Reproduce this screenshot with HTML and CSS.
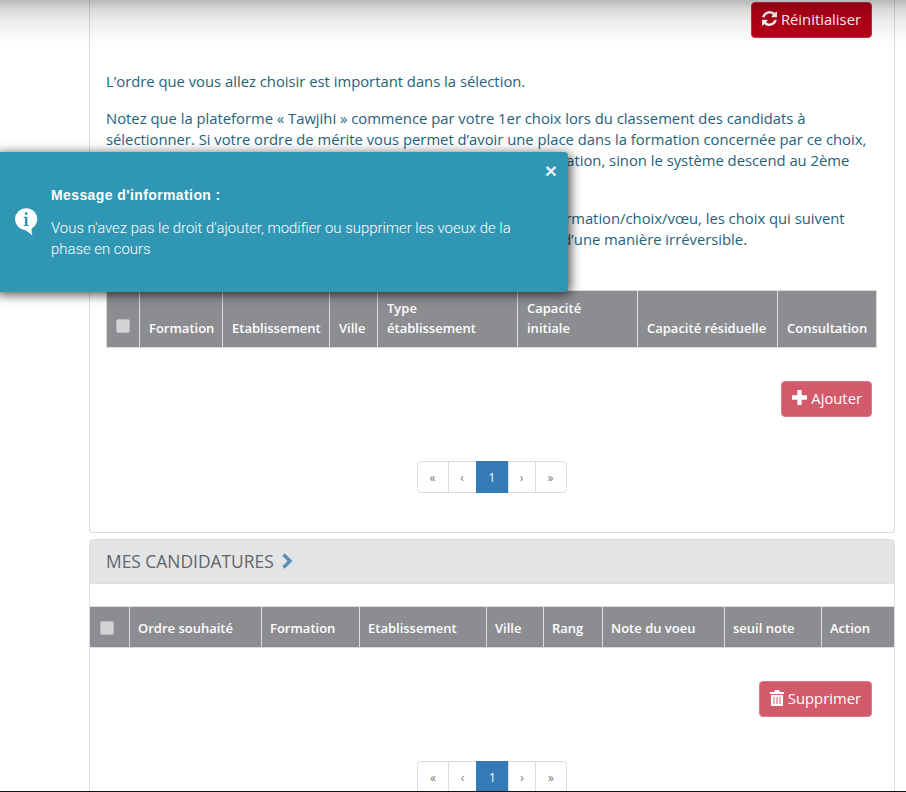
FILE: index.html
```html
<!DOCTYPE html>
<html lang="fr">
<head>
<meta charset="utf-8">
<title>Tawjihi</title>
<link rel="stylesheet" href="styles.css">
</head>
<body>
<div class="page">
  <div class="topshade"></div>
  <section class="panel panel-first">
    <div class="actions actions-reset">
      <button class="btn btn-red"><svg class="ico" viewBox="0 0 1536 1536"><path fill="currentColor" d="M1511 928q0 5-1 7-64 268-268 434.5t-478 166.5q-146 0-282.5-55t-243.5-157l-129 129q-19 19-45 19t-45-19-19-45v-448q0-26 19-45t45-19h448q26 0 45 19t19 45-19 45l-137 137q71 66 161 102t187 36q134 0 250-65t186-179q11-17 53-117 8-23 30-23h192q13 0 22.5 9.5t9.5 22.5zm25-800v448q0 26-19 45t-45 19h-448q-26 0-45-19t-19-45 19-45l138-138q-148-137-349-137-134 0-250 65t-186 179q-11 17-53 117-8 23-30 23h-199q-13 0-22.5-9.5t-9.5-22.5v-7q65-268 270-434.5t480-166.5q146 0 284 55.5t245 156.5l130-129q19-19 45-19t45 19 19 45z"/></svg> Réinitialiser</button>
    </div>
    <div class="intro">
      <p>L’ordre que vous allez choisir est important dans la sélection.</p>
      <p>Notez que la plateforme « Tawjihi » commence par votre 1er choix lors du classement des candidats à<br>sélectionner. Si votre ordre de mérite vous permet d’avoir une place dans la formation concernée par ce choix,<br>elle vous est attribuée et les autres choix sont ignorés dans la formation, sinon le système descend au 2ème<br>choix et ainsi de suite.</p>
      <p>Attention : dès que le système vous a attribué une place sur une formation/choix/vœu, les choix qui suivent<br>ce dernier sur votre liste de vœux sont automatiquement annulés d’une manière irréversible.</p>
    </div>
    <table class="grid grid-offers">
      <thead>
        <tr>
          <th><span class="check"></span></th>
          <th>Formation</th>
          <th>Etablissement</th>
          <th>Ville</th>
          <th>Type<br>établissement</th>
          <th>Capacité<br>initiale</th>
          <th>Capacité résiduelle</th>
          <th>Consultation</th>
        </tr>
      </thead>
    </table>
    <div class="actions actions-add">
      <button class="btn btn-rose"><svg class="ico ico-plus" viewBox="0 0 14 14"><path fill="currentColor" d="M5 0h4v5h5v4H9v5H5V9H0V5h5z"/></svg> Ajouter</button>
    </div>
    <nav class="pager">
      <a>«</a><a>‹</a><a class="on">1</a><a>›</a><a>»</a>
    </nav>
  </section>

  <section class="panel panel-second">
    <h2 class="panel-head">MES CANDIDATURES <svg class="chev" viewBox="0 0 12 16"><path fill="none" stroke="currentColor" stroke-width="3.6" d="M2.500 1.500 9 8l-6.500 6.500"/></svg></h2>
    <table class="grid grid-apps">
      <thead>
        <tr>
          <th><span class="check"></span></th>
          <th>Ordre souhaité</th>
          <th>Formation</th>
          <th>Etablissement</th>
          <th>Ville</th>
          <th>Rang</th>
          <th>Note du voeu</th>
          <th>seuil note</th>
          <th>Action</th>
        </tr>
      </thead>
    </table>
    <div class="actions actions-del">
      <button class="btn btn-rose"><svg class="ico ico-trash" viewBox="0 0 14 16"><path fill="currentColor" fill-rule="evenodd" d="M5 0h4l1 2h4v2H0V2h4zM1 5h12v11H1zm2.500 2v7h1V7zm3 0v7h1V7zm3 0v7h1V7z"/></svg> Supprimer</button>
    </div>
    <nav class="pager">
      <a>«</a><a>‹</a><a class="on">1</a><a>›</a><a>»</a>
    </nav>
  </section>

  <aside class="toast">
    <span class="toast-close">×</span>
    <svg class="toast-icon" viewBox="0 0 20 26"><path fill="#fff" d="M10 1a9.500 9.500 0 0 0-1 18.950c2 .8 4 2.600 7 5.050-1-2-1.500-4-1-6.300A9.500 9.500 0 0 0 10 1z"/><path fill="#2f96b4" d="M9 4.500h2.200v2.200H9zM8 8.500h3.200v7h1v1H8v-1h1.100V9.500H8z"/></svg>
    <div class="toast-body">
      <div class="toast-title">Message d'information :</div>
      <div class="toast-text">Vous n'avez pas le droit d'ajouter, modifier ou supprimer les voeux de la phase en cours</div>
    </div>
  </aside>
</div>
</body>
</html>
```

FILE: styles.css
```css
* { box-sizing: border-box; }
html, body { margin: 0; padding: 0; background: #fff; }
body { font-family: "Open Sans", sans-serif; font-size: 14.8px; color: #24627c; }
.page { position: relative; width: 906px; height: 792px; overflow: hidden; border-bottom: 1px solid #111; padding-left: 89px; }
.topshade { position: absolute; left: 0; top: 0; width: 100%; height: 44px; background: linear-gradient(rgba(0,0,0,.28), rgba(0,0,0,.14) 10px, rgba(0,0,0,.07) 22px, rgba(0,0,0,0)); pointer-events: none; z-index: 2; }

.panel { width: 806px; background: #fff; border: 1px solid #ddd; }
.panel-first { height: 533px; border-top: 0; border-radius: 0 0 4px 4px; margin-bottom: 6px; padding: 2px 17px 0 16px; }
.panel-second { height: 261px; border-bottom: 0; border-radius: 4px 4px 0 0; }

.actions { display: flex; justify-content: flex-end; }
.actions-reset { margin-right: 5px; }
.actions-add { margin: 33px 5px 0 0; }
.actions-add .btn { padding: 0 9px 3px 10px; }
.actions-del { margin: 33px 22px 0 0; }

.btn { display: inline-flex; align-items: center; gap: 4px; height: 36px; padding: 0 10px 3px; font: 14.8px "Open Sans", sans-serif; color: #fff; border: 1px solid transparent; border-radius: 4px; }
.btn-red { background: #b80017; border-color: #c9303f; }
.btn-rose { background: #d35a6a; border-color: #df7a88; }
.ico { width: 15px; height: 15px; flex: none; }
.ico-trash { width: 14px; height: 16px; }

.intro { margin-top: 33px; }
.intro p { margin: 0 0 16px; line-height: 21px; white-space: nowrap; }

.grid { border-collapse: collapse; table-layout: fixed; background: #8c8d91; }
.grid th { border: 1px solid #ddd; color: #fff; font-weight: 600; font-size: 13px; line-height: 20px; text-align: left; vertical-align: bottom; }
.grid-offers { width: 770px; margin-top: 40px; }
.grid-offers th { padding: 7px 9px 9px; }
.grid-offers th:nth-child(1) { width: 33px; }
.grid-offers th:nth-child(2) { width: 83px; }
.grid-offers th:nth-child(3) { width: 107px; }
.grid-offers th:nth-child(4) { width: 48px; }
.grid-offers th:nth-child(5) { width: 140px; }
.grid-offers th:nth-child(6) { width: 120px; }
.grid-offers th:nth-child(7) { width: 140px; }
.grid-offers th:nth-child(8) { width: 99px; }
.grid-apps { width: 804px; margin-top: 22px; }
.grid-apps th { padding: 11px 8px 9px; border-left-color: #8c8d91; }
.grid-apps th + th { border-left-color: #ddd; }
.grid-apps th:nth-child(1) { width: 39px; }
.grid-apps th:nth-child(2) { width: 132px; }
.grid-apps th:nth-child(3) { width: 98px; }
.grid-apps th:nth-child(4) { width: 127px; }
.grid-apps th:nth-child(5) { width: 57px; }
.grid-apps th:nth-child(6) { width: 59px; }
.grid-apps th:nth-child(7) { width: 122px; }
.grid-apps th:nth-child(8) { width: 97px; }
.grid-apps th:nth-child(9) { width: 73px; }
.check { display: block; width: 14px; height: 14px; background: #d4d4d6; border: 1px solid #bcbcbf; border-radius: 2px; margin: 0 0 5px; }
.grid-apps .check { margin: 0 0 3px 1px; }

.pager { display: flex; width: 150px; height: 32px; margin: 44px auto 0; }
.pager a { flex: none; display: flex; align-items: center; justify-content: center; border: 1px solid #ddd; margin-left: -1px; font-size: 12px; color: #777; background: #fff; }
.pager a:nth-child(1) { width: 32px; margin-left: 0; border-radius: 4px 0 0 4px; }
.pager a:nth-child(2) { width: 29px; }
.pager a:nth-child(3) { width: 33px; background: #337ab7; border-color: #337ab7; color: #fff; }
.pager a:nth-child(4) { width: 28px; }
.pager a:nth-child(5) { width: 32px; border-radius: 0 4px 4px 0; }

.panel-head { margin: 0; height: 44px; display: flex; align-items: center; gap: 7px; padding: 0 0 2px 16px; background: #e3e4e6; border-bottom: 1px solid #ddd; border-radius: 3px 3px 0 0; font-size: 17.400px; font-weight: 400; color: #5f6469; }
.chev { width: 12px; height: 16px; color: #5f8fb5; }

.toast { position: absolute; z-index: 3; left: -6px; top: 152px; width: 574px; height: 140px; background: #2f96b4; border-radius: 4px; box-shadow: 2px 2px 12px rgba(0,0,0,.75); color: #fff; font-family: "Liberation Sans", sans-serif; }
.toast-close { position: absolute; right: 11px; top: 7px; font: bold 21px/24px "Liberation Sans", sans-serif; color: #e4f2f6; }
.toast-icon { position: absolute; left: 20px; top: 55px; width: 24px; height: 30px; }
.toast-body { padding: 33px 40px 0 57px; }
.toast-title { font-weight: 700; font-size: 14px; letter-spacing: .4px; line-height: 20px; margin-bottom: 13px; }
.toast-text { font-family: Roboto, sans-serif; font-weight: 300; font-size: 14.900px; line-height: 21px; }
```
